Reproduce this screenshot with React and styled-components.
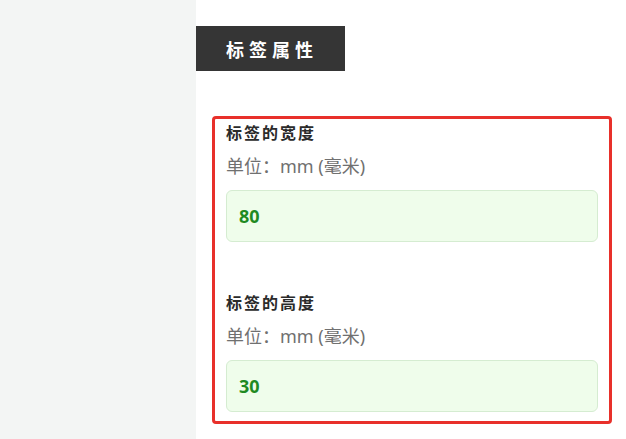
import React from "react";
import styled, { createGlobalStyle } from "styled-components";

const GlobalStyle = createGlobalStyle`
  html, body {
    margin: 0;
    padding: 0;
    background: #ffffff;
    font-family: "Noto Sans", "Noto Sans CJK SC", sans-serif;
  }
`;

const fields = [
  { label: "标签的宽度", unit: "单位：mm (毫米)", value: "80" },
  { label: "标签的高度", unit: "单位：mm (毫米)", value: "30" },
];

const App = () => {
  return (
    <Page>
      <GlobalStyle />
      <Sidebar />
      <Main>
        <SectionHeader>标签属性</SectionHeader>
        <FieldBox>
          {fields.map((f) => (
            <Field key={f.label}>
              <Label>{f.label}</Label>
              <Unit>{f.unit}</Unit>
              <ValueInput type="text" defaultValue={f.value} />
            </Field>
          ))}
        </FieldBox>
      </Main>
    </Page>
  );
};

const Page = styled.div`
  display: flex;
  width: 100%;
  height: 100vh;
  overflow: hidden;
`;

const Sidebar = styled.aside`
  width: 196px;
  flex-shrink: 0;
  background-color: #f3f5f4;
`;

const Main = styled.main`
  flex: 1;
  display: flex;
  flex-direction: column;
  align-items: flex-start;
`;

const SectionHeader = styled.div`
  margin-top: 26px;
  height: 45px;
  width: 149px;
  box-sizing: border-box;
  padding-left: 30px;
  display: flex;
  align-items: center;
  background-color: #353535;
  color: #ffffff;
  font-size: 18px;
  font-weight: 700;
  letter-spacing: 5px;
`;

const FieldBox = styled.div`
  margin: 45px 0 0 16px;
  width: 400px;
  box-sizing: border-box;
  border: 3px solid #e8302a;
  border-radius: 4px;
  padding: 3px 11px 9px;
`;

const Field = styled.div`
  display: flex;
  flex-direction: column;
  & + & {
    margin-top: 50px;
  }
`;

const Label = styled.div`
  font-size: 16px;
  line-height: 22px;
  font-weight: 700;
  letter-spacing: 2px;
  color: #2b2b2b;
`;

const Unit = styled.div`
  margin-top: 10px;
  font-size: 18px;
  line-height: 24px;
  color: #707070;
`;

const ValueInput = styled.input`
  margin-top: 12px;
  height: 52px;
  width: 100%;
  box-sizing: border-box;
  padding: 0 12px;
  border: 1px solid #d5ecd1;
  border-radius: 6px;
  background-color: #effdeb;
  color: #1f8a22;
  font-family: "Noto Sans", "Noto Sans CJK SC", sans-serif;
  font-size: 18px;
  font-weight: 700;
  outline: none;
`;

export default App;
